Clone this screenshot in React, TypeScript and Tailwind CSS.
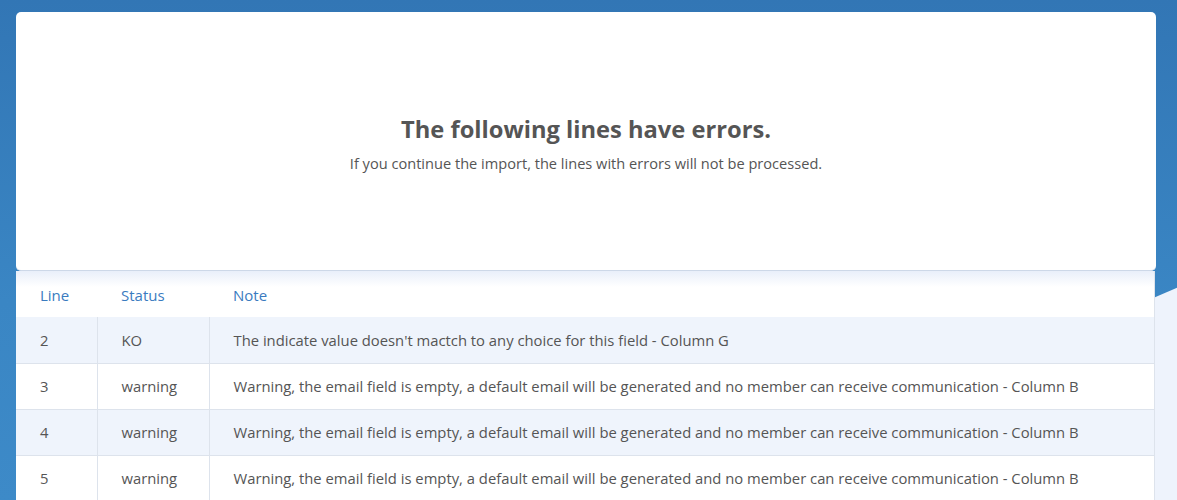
const rows = [
  { line: 2, status: "KO", note: "The indicate value doesn't mactch to any choice for this field - Column G" },
  { line: 3, status: "warning", note: "Warning, the email field is empty, a default email will be generated and no member can receive communication - Column B" },
  { line: 4, status: "warning", note: "Warning, the email field is empty, a default email will be generated and no member can receive communication - Column B" },
  { line: 5, status: "warning", note: "Warning, the email field is empty, a default email will be generated and no member can receive communication - Column B" },
];

export default function App() {
  return (
    <div
      className="relative min-h-screen overflow-hidden bg-[linear-gradient(180deg,#3276b5_0%,#3a86c4_60%,#3d8ac8_100%)] pt-3"
      style={{ fontFamily: "'Open Sans', Lato, sans-serif" }}
    >
      {/* slanted light background */}
      <svg className="absolute inset-0 h-full w-full" viewBox="0 0 1177 500" preserveAspectRatio="none">
        <polygon points="682,500 1177,287 1177,500" fill="#eef3fc" />
      </svg>

      <div className="relative ml-4 w-[1140px]">
        <div className="flex h-[259px] flex-col items-center justify-center rounded-[5px] border-b border-[#cdd8e8] bg-white">
          <h1 className="mt-[6px] text-[23.7px] font-bold leading-8 text-[#555]">The following lines have errors.</h1>
          <p className="mt-[8px] text-[14.6px] text-[#555]">
            If you continue the import, the lines with errors will not be processed.
          </p>
        </div>

        <table className="w-[1139px] border-collapse border-r border-[#dde3ec] bg-white text-[14.8px] text-[#555]">
          <thead>
            <tr className="h-[46px] bg-[linear-gradient(180deg,#e9effa_0px,#ffffff_16px)]">
              <th className="w-[81px] pl-6 pt-[2px] text-left text-[15px] font-normal text-[#3a7bbf]">Line</th>
              <th className="w-[112px] pl-6 pt-[2px] text-left text-[15px] font-normal text-[#3a7bbf]">Status</th>
              <th className="pl-6 pt-[2px] text-left text-[15px] font-normal text-[#3a7bbf]">Note</th>
            </tr>
          </thead>
          <tbody>
            {rows.map((r, i) => (
              <tr key={r.line} className={`h-[46px] border-b border-[#dde3ec] ${i % 2 === 0 ? "bg-[#eff4fc]" : "bg-white"}`}>
                <td className="border-r border-[#dde3ec] pl-6">{r.line}</td>
                <td className="border-r border-[#dde3ec] pl-6">{r.status}</td>
                <td className="pl-6">{r.note}</td>
              </tr>
            ))}
          </tbody>
        </table>
      </div>
    </div>
  );
}
